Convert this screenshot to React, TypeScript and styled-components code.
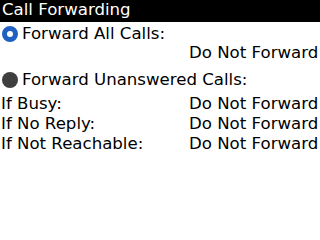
import { FC } from "react";
import styled, { createGlobalStyle } from "styled-components";

const Global = createGlobalStyle`
  html, body {
    margin: 0;
    padding: 0;
    background: #ffffff;
  }
  body {
    font-family: "DejaVu Sans", "Liberation Sans", sans-serif;
    font-size: 16.6px;
    line-height: 20px;
    color: #000;
  }
`;

const Screen = styled.div`
  width: 320px;
  height: 240px;
  background: #fff;
  overflow: hidden;
`;

const TitleBar = styled.div`
  height: 22px;
  background: #000;
  color: #fff;
  padding-left: 2px;
  line-height: 20px;
  box-sizing: border-box;
`;

const Section = styled.div<{ $gap: number }>`
  margin-top: ${(p) => p.$gap}px;
`;

const RadioRow = styled.div<{ $h: number }>`
  display: flex;
  align-items: center;
  height: ${(p) => p.$h}px;
  gap: 4px;
  padding-left: 2px;
`;

const Radio = styled.span<{ $checked?: boolean }>`
  width: 16px;
  height: 16px;
  border-radius: 50%;
  box-sizing: border-box;
  background: ${(p) => (p.$checked ? "#fff" : "#3f3f3f")};
  border: ${(p) => (p.$checked ? "5px solid #2060c0" : "none")};
  flex-shrink: 0;
`;

const List = styled.div`
  padding-top: 4px;
`;

const Row = styled.div`
  display: grid;
  grid-template-columns: 188px 1fr;
  height: 20px;
  padding-left: 1px;
  white-space: nowrap;
`;

const Label = styled.span``;

const Value = styled.span``;

type Item = { label: string; value: string };

const items: Item[] = [
  { label: "If Busy:", value: "Do Not Forward" },
  { label: "If No Reply:", value: "Do Not Forward" },
  { label: "If Not Reachable:", value: "Do Not Forward" },
];

const App: FC = () => {
  return (
    <Screen>
      <Global />
      <TitleBar>Call Forwarding</TitleBar>
      <Section $gap={2}>
        <RadioRow $h={19}>
          <Radio $checked />
          Forward All Calls:
        </RadioRow>
        <Row>
          <Label />
          <Value>Do Not Forward</Value>
        </Row>
      </Section>
      <Section $gap={7}>
        <RadioRow $h={20}>
          <Radio />
          Forward Unanswered Calls:
        </RadioRow>
        <List>
          {items.map((it) => (
            <Row key={it.label}>
              <Label>{it.label}</Label>
              <Value>{it.value}</Value>
            </Row>
          ))}
        </List>
      </Section>
    </Screen>
  );
};

export default App;
